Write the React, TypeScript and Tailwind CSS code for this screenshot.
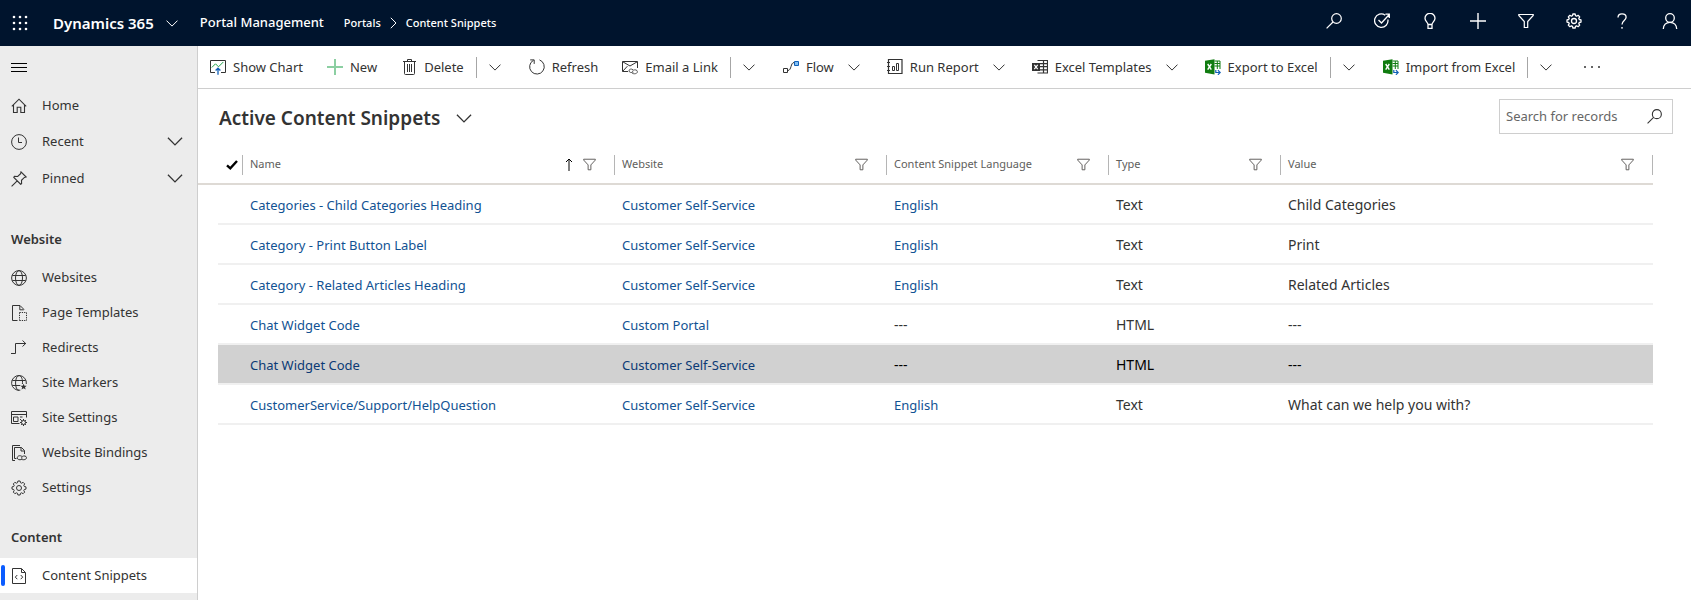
import type { ReactNode } from 'react';

type IconProps = { children: ReactNode; className?: string; box?: string };

function Icon({ children, className = 'size-4', box = '0 0 16 16' }: IconProps) {
  return (
    <svg viewBox={box} className={`shrink-0 ${className}`} fill="none" stroke="currentColor" strokeWidth="1" aria-hidden="true">
      {children}
    </svg>
  );
}

const gearPath =
  'M6.9 1h2.2l.4 1.7 1.1.5 1.5-.9 1.6 1.6-.9 1.5.5 1.1 1.7.4v2.2l-1.7.4-.5 1.1.9 1.5-1.6 1.6-1.5-.9-1.1.5L9.1 15H6.9l-.4-1.7-1.1-.5-1.5.9-1.6-1.6.9-1.5-.5-1.1L1 9.1V6.9l1.7-.4.5-1.1-.9-1.5 1.6-1.6 1.5.9 1.1-.5z';

const Chevron = ({ className = 'h-[7px] w-3' }: { className?: string }) => (
  <Icon box="0 0 12 7" className={className}>
    <path d="M.5.6 6 6.100 11.500.6" />
  </Icon>
);

const SearchIcon = ({ className = 'size-4' }: { className?: string }) => (
  <Icon className={className}>
    <circle cx="10.500" cy="5.500" r="4.800" strokeWidth="1.200" />
    <path d="M7 9 .6 15.400" strokeWidth="1.200" />
  </Icon>
);

const GearIcon = ({ weight = 1 }: { weight?: number }) => (
  <Icon>
    <path d={gearPath} strokeLinejoin="round" strokeWidth={weight} />
    <circle cx="8" cy="8" r="2.500" strokeWidth={weight} />
  </Icon>
);

const FunnelIcon = ({ className = 'size-4' }: { className?: string }) => (
  <Icon className={className}>
    <path d="M.8 1.500h14.400v1L9.700 8.500v6H6.300v-6L.8 2.500z" strokeWidth="1.200" />
  </Icon>
);

const HomeIcon = () => (
  <Icon>
    <path d="M.8 8.300 8 1.200l7.200 7.100M2.500 6.800v7.700h3.700V9.200h3.600v5.300h3.700V6.800" strokeWidth="1.100" />
  </Icon>
);

const ClockIcon = () => (
  <Icon>
    <circle cx="8" cy="8" r="7.400" />
    <path d="M7.500 3.500v5h3.500" />
  </Icon>
);

const PinIcon = () => (
  <Icon>
    <path d="M10 .9 15.100 6l-1.700.4-2.900 2.900.1 3.300-1 .6L2.800 6.400l.6-1 3.300.1 2.900-2.900zM6.200 9.800.6 15.400" strokeWidth="1.100" />
  </Icon>
);

const GlobeIcon = () => (
  <Icon>
    <circle cx="8" cy="8" r="7.400" />
    <ellipse cx="8" cy="8" rx="3.500" ry="7.400" />
    <path d="M1.300 5.500h13.400M1.300 10.500h13.400" />
  </Icon>
);

const PageTemplateIcon = () => (
  <Icon>
    <path d="M6.500 15.500h-5V.5h7.500l4 4M8.800.8v4h4" />
    <path d="M8.500 7.500v8M8.500 7.500h7M15.500 7.500v8M8.500 15.500h7" strokeDasharray="1.300 1" />
  </Icon>
);

const RedirectIcon = () => (
  <Icon>
    <path d="M0 13.500h4.500v-10H15M11.500.5l3.200 3-3.200 3" />
  </Icon>
);

const SiteMarkerIcon = () => (
  <Icon>
    <path d="M9.300 15.200A7.400 7.400 0 1 1 15.300 9M8 15.400c-4.600 0-4.600-14.800 0-14.800 2.600 0 3.900 4.200 3.400 8.400M1.300 5.500h13.400M1.300 10.500h8" />
    <path d="m12.600 8.800.9 2h2.200l-1.700 1.400.7 2.300-2.100-1.300-2.100 1.300.7-2.300-1.700-1.400h2.200z" fill="currentColor" stroke="none" />
  </Icon>
);

const SiteSettingsIcon = () => (
  <Icon>
    <path d="M8.500 13.500H.5v-12h15v6M.5 4.500h15M2.500 7h4.500v4.500H2.500zM9 7h2.500M9 9.500h1" />
    <circle cx="12.500" cy="12.500" r="2" />
    <path d="M12.500 9v1.500M12.500 14.500V16M9 12.500h1.500M14.500 12.500H16M10.100 10.100l1 1M13.900 13.900l1 1M10.100 14.900l1-1M13.900 11.100l1-1" />
  </Icon>
);

const BindingsIcon = () => (
  <Icon>
    <path d="M4 15.500H1.500V.5H9M5.500 13.500h-2V2.500h7l3 3V9M10 2.500V6h3.500" />
    <path d="M11 11.500c-2-1.600-4.700-.6-4.700 1.300 0 1.700 2.200 2.600 4.400 1.500M10 13.800c1 1.500 5.500 1.300 5.500-1.100 0-1.800-2.600-2.200-4-1.300-.9.600-1 1.600-.4 2.300" />
  </Icon>
);

const SnippetIcon = () => (
  <Icon>
    <path d="M1.500.5h9l4 4v11h-13zM10.500.8v3.700h3.700" />
    <path d="M6.300 7 4.300 9.100l2 2.100M9.700 7l2 2.100-2 2.100" />
  </Icon>
);

const ChartIcon = () => (
  <Icon>
    <path d="M5 13.500H.5v-12h15v12H11" />
    <path d="m1.800 8.500 3.700-3.700 3 3L13.300 3" stroke="#1fa34a" />
    <path d="M8 15.800V9.500M5.600 11.500 8 9.200l2.400 2.300" stroke="#1160b7" strokeWidth="1.300" />
  </Icon>
);

const NewIcon = () => (
  <Icon>
    <path d="M8 0v16M0 8h16" stroke="#8ccfa2" strokeWidth="2" />
  </Icon>
);

const TrashIcon = () => (
  <Icon>
    <path d="M2 2.500h13M6.500 2.500v-2h4v2M3.500 2.500v12q0 1 1 1h8q1 0 1-1v-12M6.500 5v8M8.500 5v8M10.500 5v8" />
  </Icon>
);

const RefreshIcon = () => (
  <Icon>
    <path d="M10.500.9A7.300 7.300 0 1 1 4.500 1.300M1.200.9h4v4" />
  </Icon>
);

const EmailIcon = () => (
  <Icon>
    <path d="M6 12.500H.5v-10h15V9M.8 2.800 8 7l7.200-4.200M.8 12.200l4.600-5" />
    <path d="M11 10.800c-1.600-1.500-4.200-.5-4 1.100.2 1.600 2.200 2 3.700 1.200M9.500 13.400c.7 1.900 5.900 2 5.900-.7 0-1.800-2.500-2.300-4-1.500-1 .6-1 1.700-.2 2.300" stroke="#555" />
  </Icon>
);

const FlowIcon = () => (
  <Icon>
    <path d="M.5 9.500h4v4h-4zM4.800 11.500c4 0 2.500-8 6.400-8" />
    <path d="M11.500 2.500h4v4h-4z" fill="#83c0f3" stroke="#1160b7" />
  </Icon>
);

const ReportIcon = () => (
  <Icon>
    <path d="M1.500.5h13.500v14H1.500zM0 3.500h3M0 7.500h3M0 11.500h3" strokeWidth="1.200" />
    <path d="M5.500 7.500h2v4h-2zM9.500 4.500h2v7h-2z" />
  </Icon>
);

const ExcelTemplateIcon = () => (
  <Icon>
    <path d="M5.500 1.500h10v12.500h-10M7 4.600h8.500M7 7.700h8.500M7 10.800h8.500M11.500 1.500V14" strokeWidth="1.200" />
    <path d="M0 4h8v8H0z" fill="currentColor" stroke="none" />
    <path d="m2.300 5.800 3.400 4.400M5.700 5.800l-3.400 4.400" stroke="#fff" strokeWidth="1.200" />
  </Icon>
);

const ExcelIcon = () => (
  <Icon>
    <path d="M9.500 2H15v8M9.500 4.500H15M9.500 7H15M12.300 2v8" stroke="#107c10" />
    <path d="M0 1.800 9.500.2v15.200L0 13.800z" fill="#107c10" stroke="none" />
    <path d="m2.700 5 3.600 5.600M6.300 5l-3.600 5.600" stroke="#fff" strokeWidth="1.400" />
    <path d="M10.800 11v2.500h4.200M12.900 11.100l2.300 2.400-2.300 2.300" stroke="#1160b7" strokeWidth="1.200" />
  </Icon>
);

const ArrowUp = () => (
  <Icon className="h-[13px] w-2" box="0 0 8 13">
    <path d="M4 13V1M1 4l3-3 3 3" />
  </Icon>
);

const CheckIcon = () => (
  <Icon className="h-[10px] w-3" box="0 0 12 10">
    <path d="m1 5.300 3.300 3L11 1" strokeWidth="2.400" />
  </Icon>
);

const headerActions: { label: string; icon: ReactNode }[] = [
  { label: 'Search', icon: <SearchIcon /> },
  {
    label: 'Assistant',
    icon: (
      <Icon>
        <path d="M11.200 2.200A6.700 6.700 0 1 0 13.900 6.500M4.500 7l3 3L15 1.800M11.500 1.200h3.800V5" strokeWidth="1.300" />
      </Icon>
    ),
  },
  {
    label: 'Tips',
    icon: (
      <Icon>
        <path d="M6 11.500c0-2.500-3-3-3-6.200a5 5 0 0 1 10 0c0 3.200-3 3.700-3 6.200zM6 11.500v4h4v-4" strokeWidth="1.300" />
      </Icon>
    ),
  },
  {
    label: 'Create',
    icon: (
      <Icon>
        <path d="M8 0v16M0 8h16" strokeWidth="1.400" />
      </Icon>
    ),
  },
  { label: 'Filter', icon: <FunnelIcon /> },
  { label: 'Settings', icon: <GearIcon weight={1.3} /> },
  {
    label: 'Help',
    icon: (
      <Icon>
        <path d="M4 4.500C4 2 5.700.8 8 .8s4.100 1.300 4.100 3.500C12.100 7.500 8 7.500 8 11.500" strokeWidth="1.300" />
        <circle cx="8" cy="14.800" r=".9" fill="currentColor" stroke="none" />
      </Icon>
    ),
  },
  {
    label: 'Account',
    icon: (
      <Icon>
        <circle cx="8" cy="5" r="4.300" strokeWidth="1.300" />
        <path d="M1.300 16c0-4 2.700-6.700 6.700-6.700s6.700 2.700 6.700 6.700" strokeWidth="1.300" />
      </Icon>
    ),
  },
];

const commands: { label: string; icon: ReactNode; menu?: 'split' | 'plain' }[] = [
  { label: 'Show Chart', icon: <ChartIcon /> },
  { label: 'New', icon: <NewIcon /> },
  { label: 'Delete', icon: <TrashIcon />, menu: 'split' },
  { label: 'Refresh', icon: <RefreshIcon /> },
  { label: 'Email a Link', icon: <EmailIcon />, menu: 'split' },
  { label: 'Flow', icon: <FlowIcon />, menu: 'plain' },
  { label: 'Run Report', icon: <ReportIcon />, menu: 'plain' },
  { label: 'Excel Templates', icon: <ExcelTemplateIcon />, menu: 'plain' },
  { label: 'Export to Excel', icon: <ExcelIcon />, menu: 'split' },
  { label: 'Import from Excel', icon: <ExcelIcon />, menu: 'split' },
];

const websiteLinks: { label: string; icon: ReactNode }[] = [
  { label: 'Websites', icon: <GlobeIcon /> },
  { label: 'Page Templates', icon: <PageTemplateIcon /> },
  { label: 'Redirects', icon: <RedirectIcon /> },
  { label: 'Site Markers', icon: <SiteMarkerIcon /> },
  { label: 'Site Settings', icon: <SiteSettingsIcon /> },
  { label: 'Website Bindings', icon: <BindingsIcon /> },
  { label: 'Settings', icon: <GearIcon /> },
];

const columns = ['Name', 'Website', 'Content Snippet Language', 'Type', 'Value'];

const rows = [
  { name: 'Categories - Child Categories Heading', site: 'Customer Self-Service', language: 'English', type: 'Text', value: 'Child Categories' },
  { name: 'Category - Print Button Label', site: 'Customer Self-Service', language: 'English', type: 'Text', value: 'Print' },
  { name: 'Category - Related Articles Heading', site: 'Customer Self-Service', language: 'English', type: 'Text', value: 'Related Articles' },
  { name: 'Chat Widget Code', site: 'Custom Portal', language: '---', type: 'HTML', value: '---' },
  { name: 'Chat Widget Code', site: 'Customer Self-Service', language: '---', type: 'HTML', value: '---', selected: true },
  { name: 'CustomerService/Support/HelpQuestion', site: 'Customer Self-Service', language: 'English', type: 'Text', value: 'What can we help you with?' },
];

function TopBar() {
  return (
    <header className="flex h-[46px] shrink-0 items-center bg-[#00142d] pr-[13px] pl-3 text-white">
      <button type="button" aria-label="App launcher" className="flex w-[41px] items-center">
        <Icon>
          {[2, 8, 14].flatMap((y) => [2, 8, 14].map((x) => <circle key={`${x}-${y}`} cx={x} cy={y} r="1.300" fill="currentColor" stroke="none" />))}
        </Icon>
      </button>
      <button type="button" className="flex items-center gap-3 text-[15px] font-semibold">
        Dynamics 365
        <Chevron />
      </button>
      <a href="#portal-management" className="ml-[22px] text-[13px] font-medium">Portal Management</a>
      <nav aria-label="Breadcrumb" className="ml-5 flex items-center gap-[9px] text-[11px] font-medium">
        <a href="#portals">Portals</a>
        <Icon className="h-3 w-[7px]" box="0 0 7 12">
          <path d="m.8.8 5.200 5.200L.8 11.200" />
        </Icon>
        <a href="#content-snippets">Content Snippets</a>
      </nav>
      <div className="ml-auto flex items-center gap-8 pb-1">
        {headerActions.map((action) => (
          <button key={action.label} type="button" aria-label={action.label}>
            {action.icon}
          </button>
        ))}
      </div>
    </header>
  );
}

function SideLink({ label, icon }: { label: string; icon: ReactNode }) {
  return (
    <a href="#section" className="flex h-[35px] items-center gap-[15px] pl-[11px]">
      {icon}
      {label}
    </a>
  );
}

function Sidebar() {
  return (
    <aside className="w-[198px] shrink-0 overflow-hidden border-r border-[#cecece] bg-[#ececec] text-[13px] text-[#333]">
      <button type="button" aria-label="Toggle navigation" className="flex h-[42px] items-center pl-[11px] text-black">
        <Icon>
          <path d="M0 4.500h16M0 8.500h16M0 12.500h16" />
        </Icon>
      </button>
      <SideLink label="Home" icon={<HomeIcon />} />
      <button type="button" className="flex h-[37px] w-full items-center gap-[15px] pr-[14px] pl-[11px]">
        <ClockIcon />
        Recent
        <Chevron className="ml-auto h-[9px] w-4" />
      </button>
      <button type="button" className="flex h-[37px] w-full items-center gap-[15px] pr-[14px] pl-[11px]">
        <PinIcon />
        Pinned
        <Chevron className="ml-auto h-[9px] w-4" />
      </button>
      <h2 className="mt-[10px] flex h-[53px] items-center pt-3 pl-[11px] font-semibold">Website</h2>
      {websiteLinks.map((link) => (
        <SideLink key={link.label} {...link} />
      ))}
      <h2 className="flex h-[53px] items-center pt-3 pl-[11px] font-semibold">Content</h2>
      <a href="#content-snippets" aria-current="page" className="flex h-[35px] items-center gap-[6px] bg-white pl-px">
        <span className="h-[21px] w-1 rounded-full bg-[#0b5cff]" />
        <span className="flex items-center gap-[15px]">
          <SnippetIcon />
          Content Snippets
        </span>
      </a>
    </aside>
  );
}

function CommandBar() {
  return (
    <div role="toolbar" aria-label="Commands" className="flex h-[43px] shrink-0 items-center border-b border-[#cecece] text-[13px] whitespace-nowrap">
      {commands.map((command) => (
        <div key={command.label} className="flex items-center">
          <button type="button" className="flex items-center gap-[7px] px-3">
            {command.icon}
            <span className="pt-[2px]">{command.label}</span>
          </button>
          {command.menu === 'split' && (
            <button type="button" aria-label={`${command.label} options`} className="flex h-[21px] w-[41px] items-center border-l border-[#a6a6a6] pl-3">
              <Chevron />
            </button>
          )}
          {command.menu === 'plain' && (
            <button type="button" aria-label={`${command.label} options`} className="flex w-[29px] items-center pl-[2px]">
              <Chevron />
            </button>
          )}
        </div>
      ))}
      <button type="button" aria-label="More commands" className="px-4">
        <Icon>
          <path d="M0 8h2M7 8h2M14 8h2" strokeWidth="1.500" />
        </Icon>
      </button>
    </div>
  );
}

function Grid() {
  return (
    <table className="w-full table-fixed border-separate border-spacing-0 text-left">
      <colgroup>
        <col className="w-5" />
        <col className="w-6" />
        <col className="w-[372px]" />
        <col className="w-[272px]" />
        <col className="w-[222px]" />
        <col className="w-[172px]" />
        <col />
      </colgroup>
      <thead>
        <tr className="h-[41px] text-[11px] text-[#605e5c]">
          <td className="border-b-2 border-[#dedad5]" />
          <th scope="col" aria-label="Selected" className="border-b-2 border-[#dedad5] pt-[2px] pb-0 pl-2 text-black">
            <CheckIcon />
          </th>
          {columns.map((column, index) => (
            <th key={column} scope="col" className="border-b-2 border-[#dedad5] px-0 pt-[2px] pb-0 font-normal">
              <div
                className={`flex h-5 items-center border-l border-[#b5b5b5] pr-[18px] pl-[7px] ${index === columns.length - 1 ? 'border-r' : ''}`}
              >
                {column}
                <span className="ml-auto flex items-center gap-[10px]">
                  {index === 0 && (
                    <span className="text-black">
                      <ArrowUp />
                    </span>
                  )}
                  <FunnelIcon className="size-[13px]" />
                </span>
              </div>
            </th>
          ))}
        </tr>
      </thead>
      <tbody>
        {rows.map((row, index) => {
          const cell = row.selected ? 'border-b-2 border-[#f0f0f0] bg-[#d1d1d1] bg-clip-padding' : 'border-b-2 border-[#f0f0f0]';
          const link = row.selected ? 'text-[13px] text-[#0b3a75]' : 'text-[13px] text-[#115293]';
          const text = row.selected ? 'text-sm text-black' : 'text-sm text-[#333]';
          return (
            <tr key={index} className="h-10">
              <td className="p-0" />
              <td className={`${cell} p-0`} />
              <td className={`${cell} pr-0 pl-2`}>
                <a href="#record" className={link}>{row.name}</a>
              </td>
              <td className={`${cell} pr-0 pl-2`}>
                <a href="#website" className={link}>{row.site}</a>
              </td>
              <td className={`${cell} pr-0 pl-2`}>
                {row.language === '---' ? <span className={text}>---</span> : <a href="#language" className={link}>{row.language}</a>}
              </td>
              <td className={`${cell} pr-0 pl-2`}>
                <span className={text}>{row.type}</span>
              </td>
              <td className={`${cell} pr-0 pl-2`}>
                <span className={text}>{row.value}</span>
              </td>
            </tr>
          );
        })}
      </tbody>
    </table>
  );
}

export default function App() {
  return (
    <div className="flex h-screen flex-col overflow-hidden bg-white font-['Noto_Sans','Open_Sans',sans-serif] text-[#333]">
      <TopBar />
      <div className="flex min-h-0 flex-1">
        <Sidebar />
        <main className="flex min-w-0 flex-1 flex-col">
          <CommandBar />
          <div className="flex h-[55px] items-center pr-[18px] pl-[21px]">
            <button type="button" className="flex items-center gap-4 pt-[3px]">
              <h1 className="text-[19px] font-semibold">Active Content Snippets</h1>
              <Chevron className="h-[9px] w-4" />
            </button>
            <form role="search" className="ml-auto flex h-[35px] w-[174px] items-center border border-[#cecece] pr-[10px] pl-[6px]">
              <input type="search" aria-label="Search for records" placeholder="Search for records" className="w-full min-w-0 flex-1 text-[13px] outline-none placeholder:text-[#666]" />
              <button type="submit" aria-label="Search">
                <SearchIcon className="size-[15px]" />
              </button>
            </form>
          </div>
          <div className="pr-[38px]">
            <Grid />
          </div>
        </main>
      </div>
    </div>
  );
}
